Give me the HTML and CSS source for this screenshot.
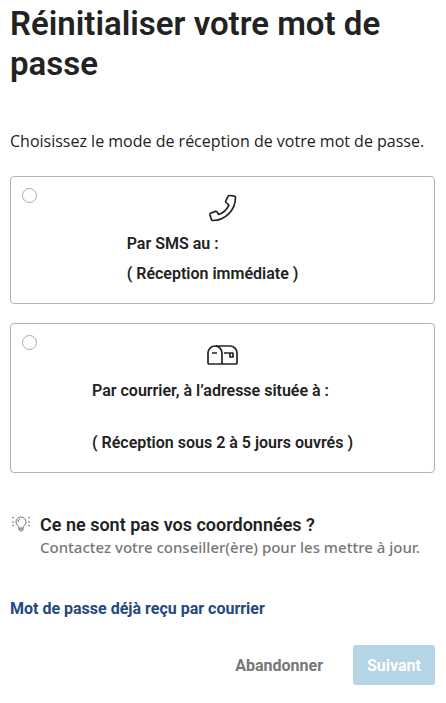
FILE: index.html
```html
<!DOCTYPE html>
<html lang="fr">

<head>
    <meta charset="UTF-8">
    <meta name="viewport" content="width=device-width, initial-scale=1.0">
    <title>Réinitialiser votre mot de passe</title>
    <link rel="stylesheet" href="styles.css">
</head>

<body>
    <main>
        <h1>Réinitialiser votre mot de passe</h1>
        <form>
            <p class="intro" id="intro">Choisissez le mode de réception de votre mot de passe.</p>

            <div class="choices" role="radiogroup" aria-labelledby="intro">
                <label class="choice">
                    <input type="radio" name="mode" value="sms">
                    <span class="content">
                        <svg class="icon" viewBox="0 0 32 32" aria-hidden="true">
                            <path d="M22.500 3.500l4.900.7q1.100.2 1.100 1.300C28.500 18 18.500 28.100 5.700 28.500q-1 0-1.300-1l-1.500-5q-.2-.9.6-1.200l5-1.900q.8-.2 1.300.4l2 2.700c4.400-1.600 8.200-5.200 10.100-9.400l-2.800-2.600q-.6-.6-.4-1.400l2.300-4.700q.4-1 1.500-.9z" />
                        </svg>
                        <span class="text phone">
                            <span>Par SMS au :</span>
                            <span>( Réception immédiate )</span>
                        </span>
                    </span>
                </label>

                <label class="choice">
                    <input type="radio" name="mode" value="courrier">
                    <span class="content">
                        <svg class="icon" viewBox="0 0 32 32" aria-hidden="true">
                            <path d="M9 7H23a7 7 0 0 1 7 7v10q0 1-1 1H2q-1 0-1-1V14a7 7 0 0 1 14 0v11" />
                            <path d="M5 14h5M17 14h9v4h-3v-4" />
                        </svg>
                        <span class="text address">
                            <span>Par courrier, à l’adresse située à :</span>
                            <span>( Réception sous 2 à 5 jours ouvrés )</span>
                        </span>
                    </span>
                </label>
            </div>

            <div class="help">
                <svg class="bulb" viewBox="0 0 20 20" aria-hidden="true">
                    <path d="M9 13c0-2-3-3-3-6a5 5 0 0 1 10 0c0 3-3 4-3 6zM9 13v2l1 1h2l1-1v-2M9 14h4M8 7q0-2 2-3M2 2l2 1M2 7h2M2 11l2-1M20 2l-2 1M20 7h-2M20 11l-2-1" />
                </svg>
                <div>
                    <h2>Ce ne sont pas vos coordonnées ?</h2>
                    <p>Contactez votre conseiller(ère) pour les mettre à jour.</p>
                </div>
            </div>

            <a class="received" href="#">Mot de passe déjà reçu par courrier</a>

            <div class="actions">
                <button type="button" class="cancel">Abandonner</button>
                <button type="submit" class="next" disabled>Suivant</button>
            </div>
        </form>
    </main>
</body>

</html>
```
FILE: styles.css
```css
* {
    box-sizing: border-box;
}

body {
    margin: 0;
    background-color: #ffffff;
    color: #222222;
    font-family: Roboto, "Liberation Sans", sans-serif;
    font-size: 16px;
}

main {
    padding: 4px 11px 16px 10px;
}

h1,
h2,
p {
    margin: 0;
}

h1 {
    font-size: 33px;
    line-height: 40px;
    font-weight: 600;
}

.intro {
    margin-top: 45px;
    font-family: "Open Sans", sans-serif;
    font-weight: 400;
    line-height: 24px;
}

.choices {
    display: flex;
    flex-direction: column;
    gap: 19px;
    margin-top: 23px;
}

.choice {
    display: flex;
    align-items: flex-start;
    padding: 11px;
    border: 1px solid #b2b2b2;
    border-radius: 4px;
    cursor: pointer;
}

.choice input {
    appearance: none;
    flex: none;
    width: 15px;
    height: 15px;
    margin: 0;
    border: 1px solid #aaaaaa;
    border-radius: 50%;
    background-color: #ffffff;
}

.choice input:checked {
    border: 4px solid #234883;
}

.content {
    flex: 1;
    display: flex;
    flex-direction: column;
    align-items: center;
    padding: 4px 15px 6px 0;
}

.icon {
    width: 32px;
    height: 32px;
    fill: none;
    stroke: #222529;
    stroke-width: 1.7;
    stroke-linejoin: round;
}

.text {
    display: flex;
    flex-direction: column;
    gap: 6px;
    margin-top: 8px;
    line-height: 24px;
    font-weight: 600;
}

.phone {
    padding-right: 20px;
}

.address {
    gap: 28px;
}

.help {
    display: flex;
    gap: 10px;
    margin-top: 40px;
}

.bulb {
    flex: none;
    width: 20px;
    height: 20px;
    margin-top: 2px;
    fill: none;
    stroke: #777777;
    stroke-width: 1;
}

h2 {
    font-size: 18px;
    line-height: 24px;
    font-weight: 600;
}

.help p {
    color: #777777;
    font-family: "Noto Sans", sans-serif;
    font-size: 15px;
    line-height: 20px;
    font-weight: 500;
}

.received {
    display: block;
    margin-top: 40px;
    color: #234883;
    line-height: 24px;
    font-weight: 700;
    text-decoration: none;
}

.actions {
    display: flex;
    justify-content: flex-end;
    gap: 16px;
    margin-top: 24px;
}

button {
    height: 40px;
    padding: 0 14px;
    border: none;
    border-radius: 3px;
    font-family: inherit;
    font-size: 16px;
    font-weight: 700;
    cursor: pointer;
}

.cancel {
    background-color: transparent;
    color: #777777;
}

.next {
    background-color: #b5d4e6;
    color: #ffffff;
}
```
